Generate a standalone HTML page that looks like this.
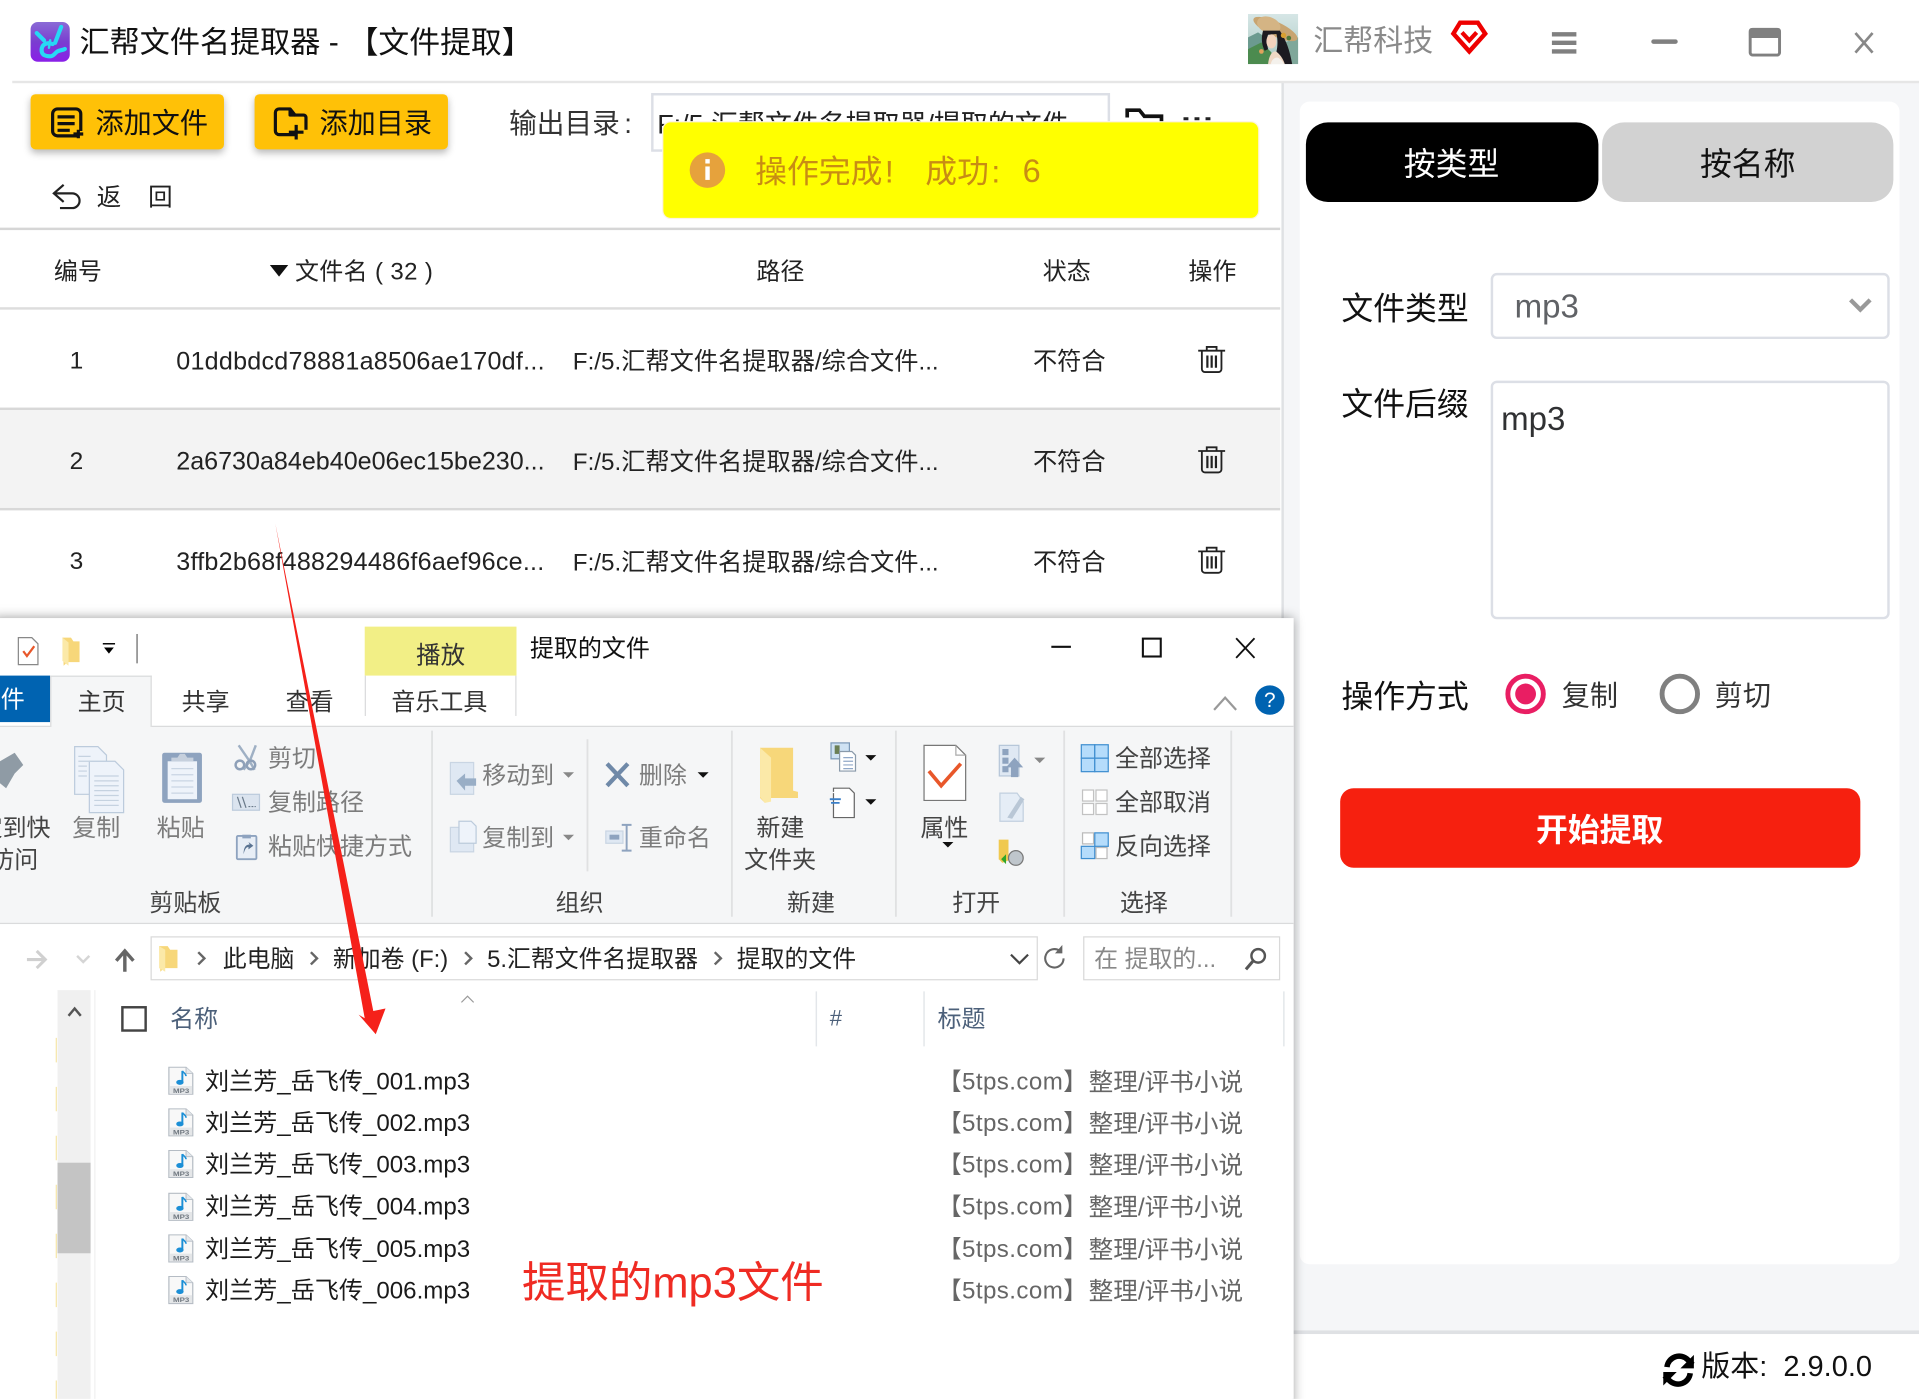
<!DOCTYPE html>
<html lang="zh-CN"><head><meta charset="utf-8"><title>汇帮文件名提取器</title>
<style>
html,body{margin:0;padding:0;width:1919px;height:1399px;overflow:hidden;background:#fff}
#w{position:absolute;left:0;top:0;width:1568px;height:1143px;transform-origin:0 0;transform:scale(1.2239);overflow:hidden;background:#fff;font-family:"Liberation Sans","Noto Sans CJK SC",sans-serif;color:#222}
.t,.c{position:absolute;white-space:nowrap;line-height:1}
.t{transform:translateY(calc(-50% + 2px))}
.c{transform:translate(-50%,calc(-50% + 2px))}
.b{position:absolute;box-sizing:border-box}
svg.l{position:absolute;left:0;top:0;width:1568px;height:1143px;overflow:visible}
.g{color:#7c7c7c}.d{color:#444}
</style></head><body><div id="w">

<!-- right panel -->
<div class="b" style="left:1047px;top:67px;width:521px;height:1020px;background:#f5f6f8;border-left:2px solid #dfe1e4"></div>
<div class="b" style="left:1062px;top:83px;width:490px;height:950px;background:#fff;border-radius:8px"></div>
<div class="b" style="left:0;top:66px;width:1558px;height:2px;left:10px;background:#e6e6e6"></div>
<div class="b" style="left:1047px;top:1087px;width:521px;height:3px;background:#dfe1e4"></div>
<div class="b" style="left:1067px;top:100px;width:239px;height:65px;background:#000;border-radius:18px"></div>
<div class="b" style="left:1309px;top:100px;width:238px;height:65px;background:#d2d2d2;border-radius:18px"></div>
<div class="c" style="left:1186px;top:131.500px;font-size:26px;color:#fff">按类型</div>
<div class="c" style="left:1428px;top:131.500px;font-size:26px;color:#111">按名称</div>
<div class="t" style="left:1096px;top:250px;font-size:26px;color:#111">文件类型</div>
<div class="b" style="left:1218px;top:223px;width:326px;height:54px;border:2px solid #dcdfe6;border-radius:5px;background:#fff"></div>
<div class="t" style="left:1237.500px;top:249px;font-size:27px;color:#606266">mp3</div>
<div class="t" style="left:1096px;top:328px;font-size:26px;color:#111">文件后缀</div>
<div class="b" style="left:1218px;top:311px;width:326px;height:195px;border:2px solid #dcdfe6;border-radius:5px;background:#fff"></div>
<div class="t" style="left:1226.500px;top:341px;font-size:27px;color:#303133">mp3</div>
<div class="t" style="left:1096px;top:567px;font-size:26px;color:#111">操作方式</div>
<div class="t" style="left:1276px;top:567px;font-size:23px;color:#333">复制</div>
<div class="t" style="left:1401px;top:567px;font-size:23px;color:#333">剪切</div>
<div class="b" style="left:1095px;top:644px;width:425px;height:65px;background:#f6200f;border-radius:11px"></div>
<div class="c" style="left:1307px;top:676px;font-size:26px;font-weight:700;color:#fff">开始提取</div>
<div class="t" style="left:1390px;top:1116px;font-size:23.700px;color:#111">版本:&nbsp;&nbsp;2.9.0.0</div>

<svg class="l" viewBox="0 0 1568 1143">
 <path d="M1512 245l8 8 8-8" fill="none" stroke="#999" stroke-width="3.5"/>
 <circle cx="1246.500" cy="567" r="14.500" fill="#fff" stroke="#e91e63" stroke-width="4"/><circle cx="1246.500" cy="567" r="8.500" fill="#e91e63"/>
 <circle cx="1372.500" cy="567" r="14.500" fill="#fff" stroke="#808080" stroke-width="4"/>
 <g fill="none" stroke="#000" stroke-width="4.5">
  <path d="M1362 1117a10 10 0 0 1 17-6l4 4"/><path d="M1381 1122a10 10 0 0 1-17 6l-4-4"/>
 </g>
 <path d="M1384 1107v11h-11zM1359 1132v-11h11z" fill="#000"/>
</svg>

<!-- title bar -->
<svg class="l" viewBox="0 0 1568 1143">
 <defs><linearGradient id="lg" x1="0" y1="0" x2="0" y2="1"><stop offset="0" stop-color="#8a6bd6"/><stop offset=".5" stop-color="#7a3dd0"/><stop offset="1" stop-color="#8a1fe8"/></linearGradient>
 <linearGradient id="sky" x1="0" y1="0" x2="0" y2="1"><stop offset="0" stop-color="#d6e6e6"/><stop offset="1" stop-color="#a9c9c2"/></linearGradient></defs>
 <rect x="25" y="18" width="32" height="32.500" rx="6" fill="url(#lg)"/>
 <g fill="none" stroke="#27d8f5" stroke-width="3.400" stroke-linecap="round">
  <path d="M30 27l6 6"/><path d="M50 22l-5 13"/>
  <path d="M43 36c-6-2-9 1-9 5 0 4 3 5 7 5 3 0 4-3 6-4 2-1 4-1 6-2"/>
  <path d="M41 33l-1 6" stroke-width="2"/>
 </g>
 <!-- avatar -->
 <svg x="1019.700" y="11.400" width="41" height="41" viewBox="0 0 150 150">
  <rect width="150" height="150" fill="url(#sky)"/>
  <path d="M0 70L30 55 60 75V150H0z" fill="#6b9a8f"/>
  <path d="M110 85L150 70V150H110z" fill="#7fa79a"/>
  <path d="M0 105L40 85 70 115V150H0z" fill="#4c8b4f"/>
  <ellipse cx="82" cy="45" rx="72" ry="22" transform="rotate(25 82 45)" fill="#c8a470"/>
  <ellipse cx="62" cy="33" rx="36" ry="24" transform="rotate(20 62 33)" fill="#d4b484"/>
  <path d="M45 50C38 75 42 95 50 110L60 105C55 90 55 75 60 62L85 60C90 80 88 100 85 112L110 150H132C125 110 115 80 95 50Z" fill="#1c1a20"/>
  <ellipse cx="70" cy="82" rx="15" ry="21" fill="#f3d3bd"/>
  <path d="M60 150C62 128 70 112 82 112 95 118 105 135 110 150z" fill="#efd8c4"/>
  <path d="M68 150C70 138 78 130 88 130 98 134 104 142 108 150z" fill="#f4f1ec"/>
  <circle cx="40" cy="112" r="7" fill="#e0a25c"/>
  <circle cx="106" cy="64" r="8" fill="#d8a030"/><circle cx="122" cy="72" r="7" fill="#4f7a3a"/>
 </svg>
 <!-- shield -->
 <path d="M1193 18.500h14.500l6 9-13 14.500-13-14.500z" fill="none" stroke="#ee0000" stroke-width="3.600" stroke-linejoin="miter"/>
 <path d="M1194.500 26.500l6 6.500 6-6.500" fill="none" stroke="#ee0000" stroke-width="3.400"/>
 <!-- hamburger -->
 <path d="M1268 28h20M1268 35h20M1268 42h20" stroke="#808080" stroke-width="3.600"/>
 <path d="M1351 34h18" stroke="#808080" stroke-width="3.600" stroke-linecap="round"/>
 <rect x="1430" y="24" width="24" height="21" rx="2" fill="none" stroke="#808080" stroke-width="2.400"/>
 <rect x="1429" y="23" width="26" height="8" rx="2" fill="#808080"/>
 <path d="M1516 27l14 16M1530 27l-14 16" stroke="#888" stroke-width="2.200"/>
</svg>
<div class="t" style="left:65px;top:34px;font-size:24.600px;color:#111">汇帮文件名提取器 -</div>
<div class="t" style="left:284px;top:34px;font-size:25.200px;color:#111">【文件提取】</div>
<div class="t" style="left:1073px;top:32.500px;font-size:24.500px;color:#8a8a8a">汇帮科技</div>

<!-- toolbar -->
<div class="b" style="left:25px;top:77px;width:158px;height:45px;background:#ffc107;border-radius:4px;box-shadow:0 3px 6px rgba(0,0,0,.28)"></div>
<div class="b" style="left:208px;top:77px;width:158px;height:45px;background:#ffc107;border-radius:4px;box-shadow:0 3px 6px rgba(0,0,0,.28)"></div>
<div class="t" style="left:78px;top:99px;font-size:23px;color:#111">添加文件</div>
<div class="t" style="left:261px;top:99px;font-size:23px;color:#111">添加目录</div>
<div class="t" style="left:416px;top:99.500px;font-size:22.600px;color:#333">输出目录</div>
<div class="t" style="left:510px;top:99.500px;font-size:22.600px;color:#333">:</div>
<div class="b" style="left:532px;top:76px;width:375px;height:48px;border:2px solid #dcdfe6;background:#fff;overflow:hidden"><span class="t" style="left:3px;top:22px;font-size:22px;color:#222">F:/5.汇帮文件名提取器/提取的文件</span></div>
<div class="t" style="left:79px;top:160px;font-size:20px;color:#222">返</div>
<div class="t" style="left:121px;top:160px;font-size:20px;color:#222">回</div>
<svg class="l" viewBox="0 0 1568 1143">
 <g fill="none" stroke="#111" stroke-width="2.600" stroke-linejoin="round">
  <path d="M63 111H47a4 4 0 0 1-4-4V93a4 4 0 0 1 4-4h15a4 4 0 0 1 4 4v14"/>
  <path d="M47 95.500h14M47 101h14M47 106.500h10"/>
  <path d="M60 109.500h8M64 106v7"/>
  <path d="M241 110h-13a3 3 0 0 1-3-3V92a3 3 0 0 1 3-3h9l4 5h7a2 2 0 0 1 2 2v10"/>
  <path d="M237 89v5h4"/>
  <path d="M236 108h12M242 102v12"/>
 </g>
 <g fill="none" stroke="#222" stroke-width="1.800">
  <path d="M52 151l-8 7 8 7"/><path d="M44 158h15a6 6 0 0 1 0 12h-10"/>
  <path d="M921 96v-6h10l4 5h14v6" stroke="#111" stroke-width="3"/>
 </g>
 <path d="M967 97h4M976 97h4M985 97h4" stroke="#222" stroke-width="2.500"/>
</svg>
<div class="b" style="left:0;top:186px;width:1046px;height:2px;background:#d6d6d6"></div>

<!-- table -->
<div class="t" style="left:44px;top:221px;font-size:19.600px">编号</div>
<div class="t" style="left:241px;top:221px;font-size:19.600px;letter-spacing:.3px">文件名 ( 32 )</div>
<div class="t" style="left:618px;top:221px;font-size:19.600px">路径</div>
<div class="t" style="left:852px;top:221px;font-size:19.600px">状态</div>
<div class="t" style="left:971px;top:221px;font-size:19.600px">操作</div>
<div class="b" style="left:0;top:251px;width:1046px;height:2px;background:#ddd"></div>
<div class="b" style="left:0;top:333px;width:1046px;height:2px;background:#d8d8d8"></div>
<div class="b" style="left:0;top:335px;width:1046px;height:80px;background:#f3f3f3"></div>
<div class="b" style="left:0;top:415px;width:1046px;height:2px;background:#d8d8d8"></div>
<div class="c" style="left:62.500px;top:293px;font-size:20px">1</div>
<div class="c" style="left:62.500px;top:375px;font-size:20px">2</div>
<div class="c" style="left:62.500px;top:457px;font-size:20px">3</div>
<div class="t" style="left:144px;top:294px;font-size:20.500px;letter-spacing:.21px">01ddbdcd78881a8506ae170df...</div>
<div class="t" style="left:144px;top:376px;font-size:20.500px">2a6730a84eb40e06ec15be230...</div>
<div class="t" style="left:144px;top:458px;font-size:20.500px;letter-spacing:.2px">3ffb2b68f488294486f6aef96ce...</div>
<div class="t" style="left:468px;top:294.500px;font-size:19.800px">F:/5.汇帮文件名提取器/综合文件...</div>
<div class="t" style="left:468px;top:376.500px;font-size:19.800px">F:/5.汇帮文件名提取器/综合文件...</div>
<div class="t" style="left:468px;top:458.500px;font-size:19.800px">F:/5.汇帮文件名提取器/综合文件...</div>
<div class="t" style="left:844px;top:294.500px;font-size:19.800px">不符合</div>
<div class="t" style="left:844px;top:376.500px;font-size:19.800px">不符合</div>
<div class="t" style="left:844px;top:458.500px;font-size:19.800px">不符合</div>
<svg class="l" viewBox="0 0 1568 1143">
 <path d="M220.500 216.500h15l-7.500 9.500z" fill="#111"/>
 <defs><g id="tr" fill="none" stroke="#222" stroke-width="1.500"><path d="M-11-8h22M-4-8v-3h8v3"/><path d="M-8-8v15a2.500 2.500 0 0 0 2.500 2.500h11A2.500 2.500 0 0 0 8 7V-8"/><path d="M-3.500-4V6M0-4V6M3.500-4V6" stroke-width="1.800"/></g></defs>
 <use href="#tr" x="990" y="294.500"/><use href="#tr" x="990" y="376.500"/><use href="#tr" x="990" y="458.500"/>
</svg>

<!-- toast -->
<div class="b" style="left:540.500px;top:99px;width:488px;height:80px;background:#ff0;border-radius:7px;border:1px solid #fdf3e0"></div>
<svg class="l" viewBox="0 0 1568 1143">
 <circle cx="578" cy="139" r="14.500" fill="#e6a23c"/>
 <rect x="576.300" y="136" width="3.600" height="11" fill="#fff"/><rect x="576.300" y="130" width="3.600" height="3.600" fill="#fff"/>
</svg>
<div class="t" style="left:617px;top:137.500px;font-size:26px;color:#c88c14">操作完成</div>
<div class="t" style="left:723px;top:137.500px;font-size:26px;color:#c88c14">!</div>
<div class="t" style="left:756px;top:137.500px;font-size:26px;color:#c88c14">成功</div>
<div class="t" style="left:810px;top:137.500px;font-size:26px;color:#c88c14">:</div>
<div class="t" style="left:835.500px;top:137.500px;font-size:26.500px;color:#c88c14">6</div>

<!-- explorer -->
<div class="b" style="left:-6px;top:505px;width:1063px;height:660px;background:#fff;box-shadow:0 0 9px rgba(0,0,0,.4)"></div>
<div class="b" style="left:298px;top:511.500px;width:124px;height:40.500px;background:#f2ef86"></div>
<div class="b" style="left:298px;top:552px;width:124px;height:33px;border-left:1px solid #dadbdc;border-right:1px solid #dadbdc"></div>
<div class="c" style="left:360px;top:534px;font-size:20px;color:#333">播放</div>
<div class="t" style="left:433px;top:529px;font-size:19.600px;color:#111">提取的文件</div>
<div class="b" style="left:0;top:593px;width:1057px;height:162px;background:#f5f6f7;border-top:1.500px solid #dadbdc;border-bottom:1.500px solid #dadbdc"></div>
<div class="b" style="left:0;top:552px;width:41px;height:38px;background:#0063b1"></div>
<div class="b" style="left:41px;top:552px;width:83px;height:42px;background:#f5f6f7;border:1px solid #dadbdc;border-bottom:0"></div>
<div class="t" style="left:-19px;top:571px;font-size:19.600px;color:#fff">文件</div>
<div class="c" style="left:83px;top:573px;font-size:19.600px;color:#333">主页</div>
<div class="c" style="left:168px;top:573px;font-size:19.600px;color:#333">共享</div>
<div class="c" style="left:253px;top:573px;font-size:19.600px;color:#333">查看</div>
<div class="c" style="left:359px;top:573px;font-size:19.600px;color:#333">音乐工具</div>
<svg class="l" viewBox="0 0 1568 1143">
 <!-- QAT -->
 <path d="M15 521h11l5 5v17H15z" fill="#fff" stroke="#888" stroke-width="1"/>
 <path d="M19 532l3 4 6-8" fill="none" stroke="#e8572a" stroke-width="1.800"/>
 <path d="M51 521h7l2 3 5 0v17H55l-3 3z" fill="#f7d77a"/><path d="M51 521l5 4v19l-5-4z" fill="#fbe9a8"/>
 <path d="M84 526h10" stroke="#000" stroke-width="1.200"/><path d="M85 529h8l-4 5z" fill="#000"/>
 <path d="M112 518v24" stroke="#999" stroke-width="1.500"/>
 <!-- controls -->
 <path d="M859 528.500h16" stroke="#111" stroke-width="1.700"/>
 <rect x="933.800" y="521.800" width="14.600" height="14.600" fill="none" stroke="#111" stroke-width="1.700"/>
 <path d="M1010 521.500l15 16M1025 521.500l-15 16" stroke="#111" stroke-width="1.500"/>
 <path d="M992 580l9-10 9 10" fill="none" stroke="#999" stroke-width="1.800"/>
 <circle cx="1037.500" cy="572" r="12" fill="#0063b1"/>
 <!-- ribbon dividers -->
 <g stroke="#e0e1e2" stroke-width="1.500"><path d="M353 597v152M598 597v152M732 597v152M869.500 597v152M1006 597v152M480 604v108"/></g>
 <!-- pin -->
 <path d="M0 622l12-7 7 10-7 7-7 12-5-4z" fill="#8f9ba5"/>
 <!-- copy -->
 <g fill="#eef3fa" stroke="#bccbdc" stroke-width="1"><path d="M61 610h19l7 7v32H61z"/><path d="M73 622h21l7 7v35H73z"/></g>
 <g stroke="#c5d2e0" stroke-width="1"><path d="M77 634h20M77 638h20M77 642h20M77 646h20M77 650h20M77 654h20M77 658h20M64 618h10M64 622h10M64 626h7M64 630h7M64 634h7"/></g>
 <!-- paste -->
 <rect x="132.500" y="615" width="32.500" height="41" rx="2" fill="#8ea3bf"/><rect x="137" y="622" width="24" height="31" fill="#eef3fa"/>
 <path d="M140 622v-3h5l2-3h4l2 3h5v3z" fill="#c6d0dd"/>
 <g stroke="#c9d5e3" stroke-width="1"><path d="M140 628h18M140 633h18M140 638h18M140 643h18M140 648h18"/></g>
 <!-- cut -->
 <path d="M195 609l9 13 5-13M204 622l-5 7M204 622l4 7" fill="none" stroke="#9fb0c4" stroke-width="2"/>
 <circle cx="196" cy="625" r="3.500" fill="none" stroke="#8ea0b8" stroke-width="2"/><circle cx="205" cy="625" r="3.500" fill="none" stroke="#8ea0b8" stroke-width="2"/>
 <!-- copy path -->
 <rect x="190" y="649" width="22" height="13" fill="#dbe4ef" stroke="#bccbdc"/>
 <path d="M194 651l3 9M198 651l3 9" stroke="#6a7a8a" stroke-width="1"/><path d="M203 659h6" stroke="#6a7a8a" stroke-dasharray="1.500 1"/>
 <!-- paste shortcut -->
 <rect x="193.500" y="683" width="16" height="19" rx="1" fill="#e8eef6" stroke="#8ea3bf" stroke-width="1.500"/><path d="M198 682h7v3h-7z" fill="#8ea3bf"/><path d="M199 698c0-6 2-8 5-8l-1-2 4 3-4 3v-2c-2 0-3 2-4 6z" fill="#5a7391"/>
 <!-- move to -->
 <rect x="368" y="623" width="19" height="26" fill="#dfe8f3" stroke="#c9d5e3"/><path d="M373 638l7-6v4h9v6h-9v4z" fill="#99aec6"/>
 <rect x="368" y="676" width="19" height="20" fill="#dfe8f3" stroke="#c9d5e3"/><path d="M375 671h10l4 4v14h-14z" fill="#eef3fa" stroke="#bccbdc"/>
 <path d="M460 631h9l-4.500 4.500zM460 682h9l-4.500 4.500z" fill="#888"/>
 <path d="M496 624l17 18M513 624l-17 18" stroke="#6f89a8" stroke-width="3.500"/>
 <path d="M570 631h9l-4.500 4.500z" fill="#111"/>
 <!-- rename -->
 <rect x="495" y="679" width="14" height="10" fill="#dfe8f3" stroke="#c9d5e3"/><rect x="498" y="682" width="8" height="4" fill="#8ea3bf"/><path d="M508 674h8M512 674v21M508 695h8" stroke="#8ea3bf" stroke-width="1.600" fill="none"/>
 <!-- new folder -->
 <path d="M621 611h27v35l4 1v5h-24l-3 4-4-4z" fill="#f7d77a"/><path d="M621 611l9 8v36l-5 1-4-5z" fill="#fbe9a8"/>
 <!-- new item icons -->
 <rect x="679" y="607" width="15" height="13" fill="#cfe2f3" stroke="#7c99b8"/><rect x="682" y="609" width="4" height="7" fill="#6b7f55"/>
 <path d="M686 614h10l3 3v13h-13z" fill="#fff" stroke="#8a9aaa"/><path d="M689 619h8M689 622h8M689 625h8M689 628h8" stroke="#90a8c8" stroke-width="1"/>
 <path d="M707 617h9l-4.500 4.500zM707 653h9l-4.500 4.500z" fill="#111"/>
 <path d="M681 647v-3h13l4 4v20h-17v-20" fill="#fff" stroke="#666"/><path d="M678 653h9M679 656h7" stroke="#3a7fc8" stroke-width="1.500"/>
 <!-- properties -->
 <path d="M755 609h26l8 8v37h-34z" fill="#fff" stroke="#777"/><path d="M781 609v8h8" fill="none" stroke="#aaa"/>
 <path d="M759 630l10 12 16-18" fill="none" stroke="#e8572a" stroke-width="3"/>
 <path d="M770 688h9l-4.500 4.500z" fill="#111"/>
 <!-- open icons -->
 <rect x="816.500" y="609" width="16" height="25" fill="#dfe8f3" stroke="#b6c6d8"/><path d="M819 612h5v5h-5zM819 619h5v5h-5zM819 626h5v5h-5z" fill="#8ea3bf"/>
 <path d="M822 627l7-8 7 8h-4v8h-6v-8z" fill="#8ea3bf"/>
 <path d="M845 619h9l-4.500 4.500z" fill="#888"/>
 <path d="M817 648h14l5 7v16h-19z" fill="#e5edf6" stroke="#c2d0df"/><path d="M823 668l11-17 3 2-10 16z" fill="#b9c7d6"/>
 <path d="M816 686h8v17l-5 2-3-3z" fill="#f0c94f"/><circle cx="830" cy="701" r="6" fill="#bfc6cc" stroke="#777"/><path d="M822 698l-4 4 4 4z" fill="#2fa52a"/>
 <!-- select icons -->
 <g fill="#b5dcfb" stroke="#3e8ed0"><rect x="883.500" y="608.500" width="11" height="11"/><rect x="894.500" y="608.500" width="11" height="11"/><rect x="883.500" y="619.500" width="11" height="11"/><rect x="894.500" y="619.500" width="11" height="11"/></g>
 <g fill="#fff" stroke="#c2c2c2"><rect x="884.500" y="645.500" width="9" height="9"/><rect x="895.500" y="645.500" width="9" height="9"/><rect x="884.500" y="656.500" width="9" height="9"/><rect x="895.500" y="656.500" width="9" height="9"/></g>
 <g stroke="#3e8ed0"><rect x="884.500" y="680.500" width="9" height="9" fill="#fff" stroke="#bbb"/><rect x="894.500" y="680.500" width="11" height="11" fill="#b5dcfb"/><rect x="883.500" y="691.500" width="11" height="10" fill="#b5dcfb"/><rect x="895.500" y="692.500" width="9" height="9" fill="#fff" stroke="#bbb"/></g>
</svg>
<div class="t" style="left:-17.500px;top:676px;font-size:19.600px;color:#444">定到快</div>
<div class="t" style="left:-8px;top:702px;font-size:19.600px;color:#444">访问</div>
<div class="t g" style="left:59px;top:676px;font-size:19.600px">复制</div>
<div class="t g" style="left:128px;top:676px;font-size:19.600px">粘贴</div>
<div class="t g" style="left:219px;top:619px;font-size:19.600px">剪切</div>
<div class="t g" style="left:219px;top:655px;font-size:19.600px">复制路径</div>
<div class="t g" style="left:219px;top:691px;font-size:19.600px">粘贴快捷方式</div>
<div class="t d" style="left:122px;top:737px;font-size:19.600px">剪贴板</div>
<div class="t g" style="left:394px;top:633px;font-size:19.600px">移动到</div>
<div class="t g" style="left:394px;top:684px;font-size:19.600px">复制到</div>
<div class="t g" style="left:522px;top:633px;font-size:19.600px">删除</div>
<div class="t g" style="left:522px;top:684px;font-size:19.600px">重命名</div>
<div class="t d" style="left:454px;top:737px;font-size:19.600px">组织</div>
<div class="t d" style="left:618px;top:676px;font-size:19.600px">新建</div>
<div class="t d" style="left:608px;top:702px;font-size:19.600px">文件夹</div>
<div class="t d" style="left:643px;top:737px;font-size:19.600px">新建</div>
<div class="t d" style="left:752px;top:676px;font-size:19.600px">属性</div>
<div class="t d" style="left:778px;top:737px;font-size:19.600px">打开</div>
<div class="t d" style="left:915px;top:737px;font-size:19.600px">选择</div>
<div class="t d" style="left:911px;top:619px;font-size:19.600px">全部选择</div>
<div class="t d" style="left:911px;top:655px;font-size:19.600px">全部取消</div>
<div class="t d" style="left:911px;top:691px;font-size:19.600px">反向选择</div>
<div class="c" style="left:1037.500px;top:570px;font-size:17px;color:#fff">?</div>

<!-- address bar -->
<div class="b" style="left:123px;top:765px;width:725px;height:35.500px;border:1px solid #d9d9d9;background:#fff"></div>
<div class="b" style="left:885px;top:765px;width:161px;height:35.500px;border:1px solid #d9d9d9;background:#fff"></div>
<div class="t" style="left:182px;top:783px;font-size:19.500px;color:#222">此电脑</div>
<div class="t" style="left:272px;top:783px;font-size:19.500px;color:#222">新加卷 (F:)</div>
<div class="t" style="left:398px;top:783px;font-size:19.500px;color:#222">5.汇帮文件名提取器</div>
<div class="t" style="left:602px;top:783px;font-size:19.500px;color:#222">提取的文件</div>
<div class="t" style="left:894px;top:783px;font-size:19.500px;color:#888">在 提取的...</div>

<!-- list -->
<div class="b" style="left:47px;top:809px;width:27px;height:340px;background:#f0f0f0"></div>
<div class="b" style="left:47px;top:949.500px;width:27px;height:74px;background:#c4c4c4"></div>
<div class="b" style="left:76.500px;top:809px;width:1.500px;height:340px;background:#f0f0f0"></div>
<div class="b" style="left:99px;top:822px;width:21px;height:21px;border:2px solid #444"></div>
<div class="t" style="left:139px;top:832px;font-size:19.600px;color:#4c607a">名称</div>
<div class="t" style="left:678px;top:830px;font-size:18px;color:#4c607a">#</div>
<div class="t" style="left:766px;top:832px;font-size:19.600px;color:#4c607a">标题</div>
<div class="t" style="left:167.500px;top:883px;font-size:19.700px;color:#1a1a1a">刘兰芳_岳飞传_001.mp3</div>
<div class="t" style="left:167.500px;top:917px;font-size:19.700px;color:#1a1a1a">刘兰芳_岳飞传_002.mp3</div>
<div class="t" style="left:167.500px;top:951px;font-size:19.700px;color:#1a1a1a">刘兰芳_岳飞传_003.mp3</div>
<div class="t" style="left:167.500px;top:985px;font-size:19.700px;color:#1a1a1a">刘兰芳_岳飞传_004.mp3</div>
<div class="t" style="left:167.500px;top:1020px;font-size:19.700px;color:#1a1a1a">刘兰芳_岳飞传_005.mp3</div>
<div class="t" style="left:167.500px;top:1054px;font-size:19.700px;color:#1a1a1a">刘兰芳_岳飞传_006.mp3</div>
<div class="t" style="left:766px;top:883px;font-size:19.700px;color:#666;letter-spacing:.35px">【5tps.com】</div><div class="t" style="left:889.500px;top:883px;font-size:20.100px;color:#666">整理/评书小说</div>
<div class="t" style="left:766px;top:917px;font-size:19.700px;color:#666;letter-spacing:.35px">【5tps.com】</div><div class="t" style="left:889.500px;top:917px;font-size:20.100px;color:#666">整理/评书小说</div>
<div class="t" style="left:766px;top:951px;font-size:19.700px;color:#666;letter-spacing:.35px">【5tps.com】</div><div class="t" style="left:889.500px;top:951px;font-size:20.100px;color:#666">整理/评书小说</div>
<div class="t" style="left:766px;top:985px;font-size:19.700px;color:#666;letter-spacing:.35px">【5tps.com】</div><div class="t" style="left:889.500px;top:985px;font-size:20.100px;color:#666">整理/评书小说</div>
<div class="t" style="left:766px;top:1020px;font-size:19.700px;color:#666;letter-spacing:.35px">【5tps.com】</div><div class="t" style="left:889.500px;top:1020px;font-size:20.100px;color:#666">整理/评书小说</div>
<div class="t" style="left:766px;top:1054px;font-size:19.700px;color:#666;letter-spacing:.35px">【5tps.com】</div><div class="t" style="left:889.500px;top:1054px;font-size:20.100px;color:#666">整理/评书小说</div>
<div class="t" style="left:426.500px;top:1047px;font-size:35.500px;color:#ef2b23">提取的mp3文件</div>

<svg class="l" viewBox="0 0 1568 1143">
 <path d="M22 784h14M30 777l7 7-7 7" fill="none" stroke="#d0d0d0" stroke-width="2.500"/>
 <path d="M63 781l5 5 5-5" fill="none" stroke="#d5d5d5" stroke-width="2"/>
 <path d="M102 794V778M95 785l7-8 7 8" fill="none" stroke="#666" stroke-width="2.800"/>
 <path d="M130 773h7l2 3h6v15h-11l-3 3z" fill="#f7d77a"/><path d="M130 773l5 3v18l-5-3z" fill="#fbe9a8"/>
 <g fill="none" stroke="#666" stroke-width="2"><path d="M162 778l5 5-5 5M254 778l5 5-5 5M380 778l5 5-5 5M584 778l5 5-5 5"/></g>
 <path d="M826 780l7 7 7-7" fill="none" stroke="#444" stroke-width="1.800"/>
 <path d="M869 783a7.500 7.500 0 1 1-3-6" fill="none" stroke="#666" stroke-width="1.700"/><path d="M868 772v7h-6z" fill="#666"/>
 <circle cx="1028" cy="781" r="5.500" fill="none" stroke="#555" stroke-width="2"/><path d="M1024 785l-6 7" stroke="#555" stroke-width="2.500"/>
 <path d="M56 830l5-6 5 6" fill="none" stroke="#555" stroke-width="2"/>
 <path d="M377 819l5-5 5 5" fill="none" stroke="#999" stroke-width="1"/>
 <g stroke="#e3e6ea" stroke-width="1.200"><path d="M667 810v45M755 810v45M1049 810v45"/></g>
 <g stroke="#f5e6a8" stroke-width="1"><path d="M46 848v20M46 888v20M46 928v20M46 968v20M46 1008v20M46 1048v20M46 1088v20M46 1128v15"/></g>
 <defs><g id="mp3" transform="scale(1,.85)"><path d="M0 0h14l5.500 6v20H0z" fill="#f8f8f8" stroke="#b5bcc4" stroke-width="1"/><path d="M14 0v6h5.500" fill="#e4e8ec" stroke="#b5bcc4" stroke-width=".8"/><rect x="1" y="18" width="18" height="7.500" fill="#e4e6e8"/><path d="M11 3.500v10.500" stroke="#1c8fd6" stroke-width="1.600" fill="none"/><ellipse cx="9" cy="14.500" rx="3" ry="2.400" fill="#1c8fd6"/><path d="M11 3.500c1 2 3 2.500 3 5" stroke="#1c8fd6" stroke-width="1.300" fill="none"/><text x="10" y="24.600" font-size="6.500" font-weight="700" text-anchor="middle" fill="#707880" font-family="Liberation Sans">MP3</text></g></defs>
 <use href="#mp3" x="138" y="872"/><use href="#mp3" x="138" y="906"/><use href="#mp3" x="138" y="940"/><use href="#mp3" x="138" y="975"/><use href="#mp3" x="138" y="1009"/><use href="#mp3" x="138" y="1043"/>
 <!-- red arrow -->
 <polygon points="225,428 305,826 315,824 307,845 293,829 298,832" fill="#f5211a"/>
</svg>
</div></body></html>
